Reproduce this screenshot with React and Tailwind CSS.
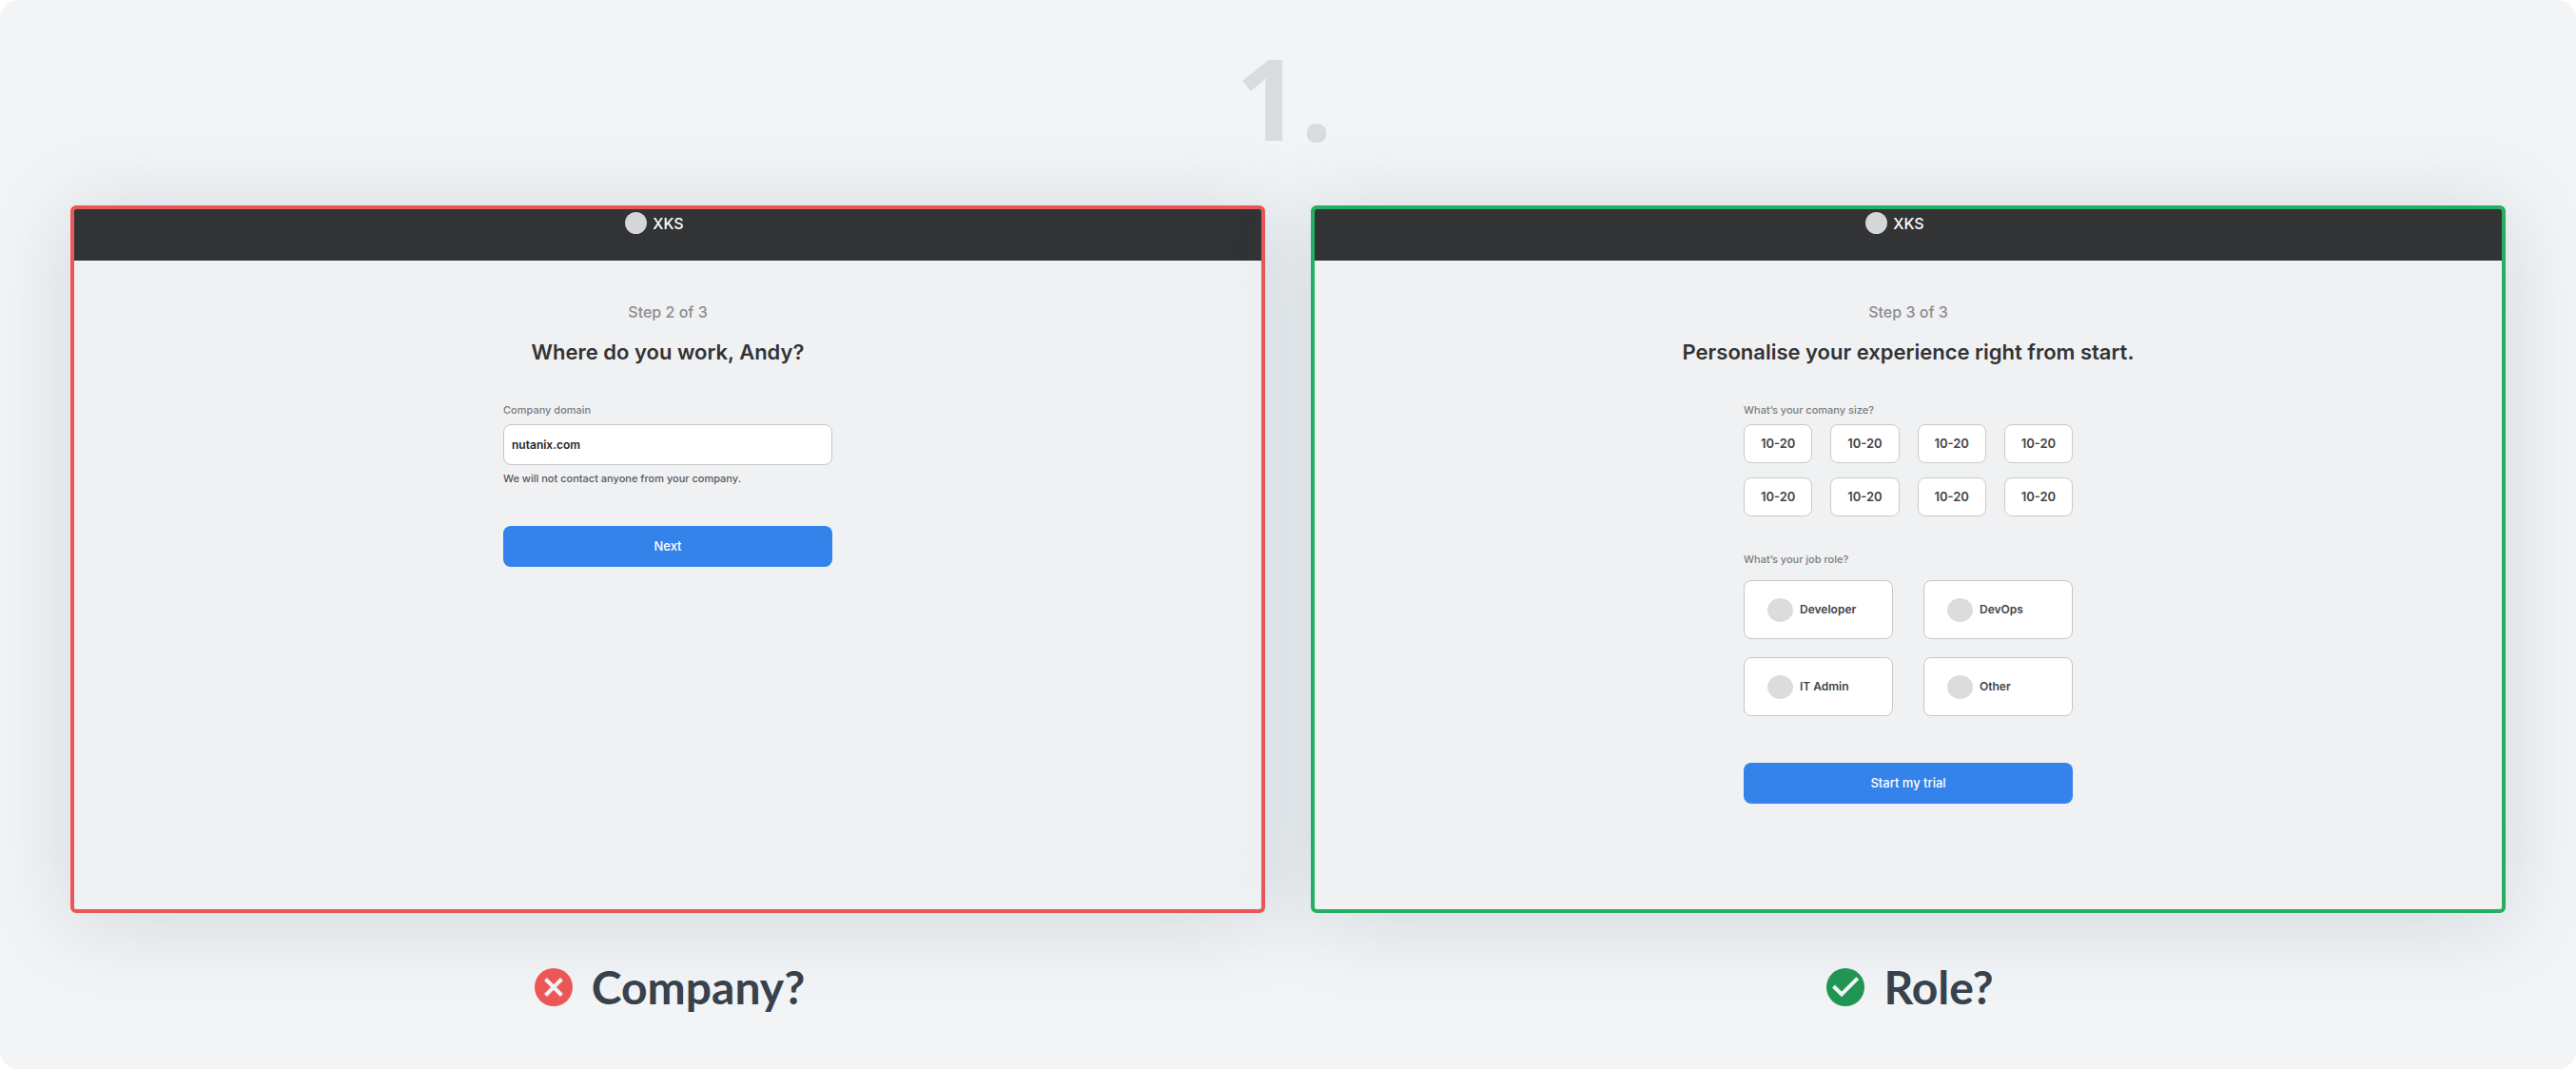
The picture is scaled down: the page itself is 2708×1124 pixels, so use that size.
import React from "react";

const sizes = ["10-20", "10-20", "10-20", "10-20", "10-20", "10-20", "10-20", "10-20"];
const roles = ["Developer", "DevOps", "IT Admin", "Other"];

function Screen({ frame, step, title, children }) {
  return (
    <section
      className={`h-[744px] overflow-hidden rounded-md border-4 bg-[#f0f1f3] font-['Inter',sans-serif] shadow-[0_8px_88px_rgba(74,104,124,0.2)] ${frame}`}
    >
      <header className="flex h-[54px] items-start justify-center gap-1.5 bg-[#323335] pt-[3px] pr-7 text-white">
        <span className="size-[23px] rounded-full bg-[#d5d6d8]" />
        <span className="text-base font-medium leading-6">XKS</span>
      </header>
      <div className="flex flex-col items-center pt-[42px]">
        <p className="text-base font-medium leading-6 text-[#8b8c8e]">{step}</p>
        <h2 className="mt-4 text-[22px] font-semibold leading-7 text-[#323335]">{title}</h2>
        <div className="mt-[39px] w-[346px]">{children}</div>
      </div>
    </section>
  );
}

function Submit({ children }) {
  return (
    <button
      type="submit"
      className="h-[43px] w-full rounded-lg bg-[#3483eb] text-[13px] font-medium text-white"
    >
      {children}
    </button>
  );
}

function CompanyForm() {
  return (
    <form onSubmit={(e) => e.preventDefault()}>
      <label htmlFor="domain" className="block text-[11px] font-medium leading-4 text-[#7c7d7f]">
        Company domain
      </label>
      <input
        id="domain"
        type="text"
        defaultValue="nutanix.com"
        className="mt-[7px] block h-[43px] w-full rounded-lg border border-[#c6c7c9] bg-white px-2 text-xs font-semibold text-[#242527] outline-none"
      />
      <p className="mt-1.5 mb-[42px] text-[11px] font-medium leading-4 text-[#57585a]">
        We will not contact anyone from your company.
      </p>
      <Submit>Next</Submit>
    </form>
  );
}

function RoleForm() {
  return (
    <form onSubmit={(e) => e.preventDefault()}>
      <p id="size-label" className="text-[11px] font-medium leading-4 text-[#7c7d7f]">
        What’s your comany size?
      </p>
      <div role="group" aria-labelledby="size-label" className="mt-[7px] grid grid-cols-4 gap-x-[19px] gap-y-[15px]">
        {sizes.map((size, i) => (
          <button
            key={i}
            type="button"
            className="h-[41px] rounded-lg border border-[#c9cacb] bg-white text-[13px] font-semibold text-[#434446]"
          >
            {size}
          </button>
        ))}
      </div>
      <p id="role-label" className="mt-[37px] text-[11px] font-medium leading-4 text-[#7c7d7f]">
        What’s your job role?
      </p>
      <div
        role="group"
        aria-labelledby="role-label"
        className="mt-3.5 mb-[49px] grid grid-cols-2 gap-x-8 gap-y-[19px]"
      >
        {roles.map((role) => (
          <button
            key={role}
            type="button"
            className="flex h-[62px] items-center gap-[7px] rounded-lg border border-[#c6c7c9] bg-white pl-6 text-xs font-semibold text-[#434446]"
          >
            <span className="h-[25px] w-[27px] rounded-[50%] bg-[#dbdcde]" />
            {role}
          </button>
        ))}
      </div>
      <Submit>Start my trial</Submit>
    </form>
  );
}

function Caption({ icon, children }) {
  return (
    <figcaption className="mt-[46px] flex items-center justify-center gap-5 pl-1 font-['Lato',sans-serif] text-5xl font-bold leading-[64px] text-[#37424d]">
      {icon}
      {children}
    </figcaption>
  );
}

const crossIcon = (
  <svg viewBox="0 0 40 40" className="size-10" aria-hidden="true">
    <circle cx="20" cy="20" r="20" fill="#eb5757" />
    <path d="M11.5 11.5 L28.5 28.5 M28.5 11.5 L11.5 28.5" stroke="#f2f3f5" strokeWidth="4" />
  </svg>
);

const checkIcon = (
  <svg viewBox="0 0 40 40" className="size-10" aria-hidden="true">
    <circle cx="20" cy="20" r="20" fill="#219653" />
    <path d="M7.5 19 L16 27.5 L32.8 10.7" fill="none" stroke="#f2f3f5" strokeWidth="4" />
  </svg>
);

export default function App() {
  return (
    <main className="min-h-screen rounded-[20px] bg-[#f2f4f6] px-[74px] pt-10 pb-[52px]">
      <h1 className="pr-2 text-center font-['Open_Sans',sans-serif] text-[119px] font-bold leading-[125px] text-[#dadbdd]">
        1.
      </h1>
      <div className="mt-[51px] grid grid-cols-2 gap-12">
        <figure>
          <Screen frame="border-[#eb5757]" step="Step 2 of 3" title="Where do you work, Andy?">
            <CompanyForm />
          </Screen>
          <Caption icon={crossIcon}>Company?</Caption>
        </figure>
        <figure>
          <Screen
            frame="border-[#27ae60]"
            step="Step 3 of 3"
            title="Personalise your experience right from start."
          >
            <RoleForm />
          </Screen>
          <Caption icon={checkIcon}>Role?</Caption>
        </figure>
      </div>
    </main>
  );
}
